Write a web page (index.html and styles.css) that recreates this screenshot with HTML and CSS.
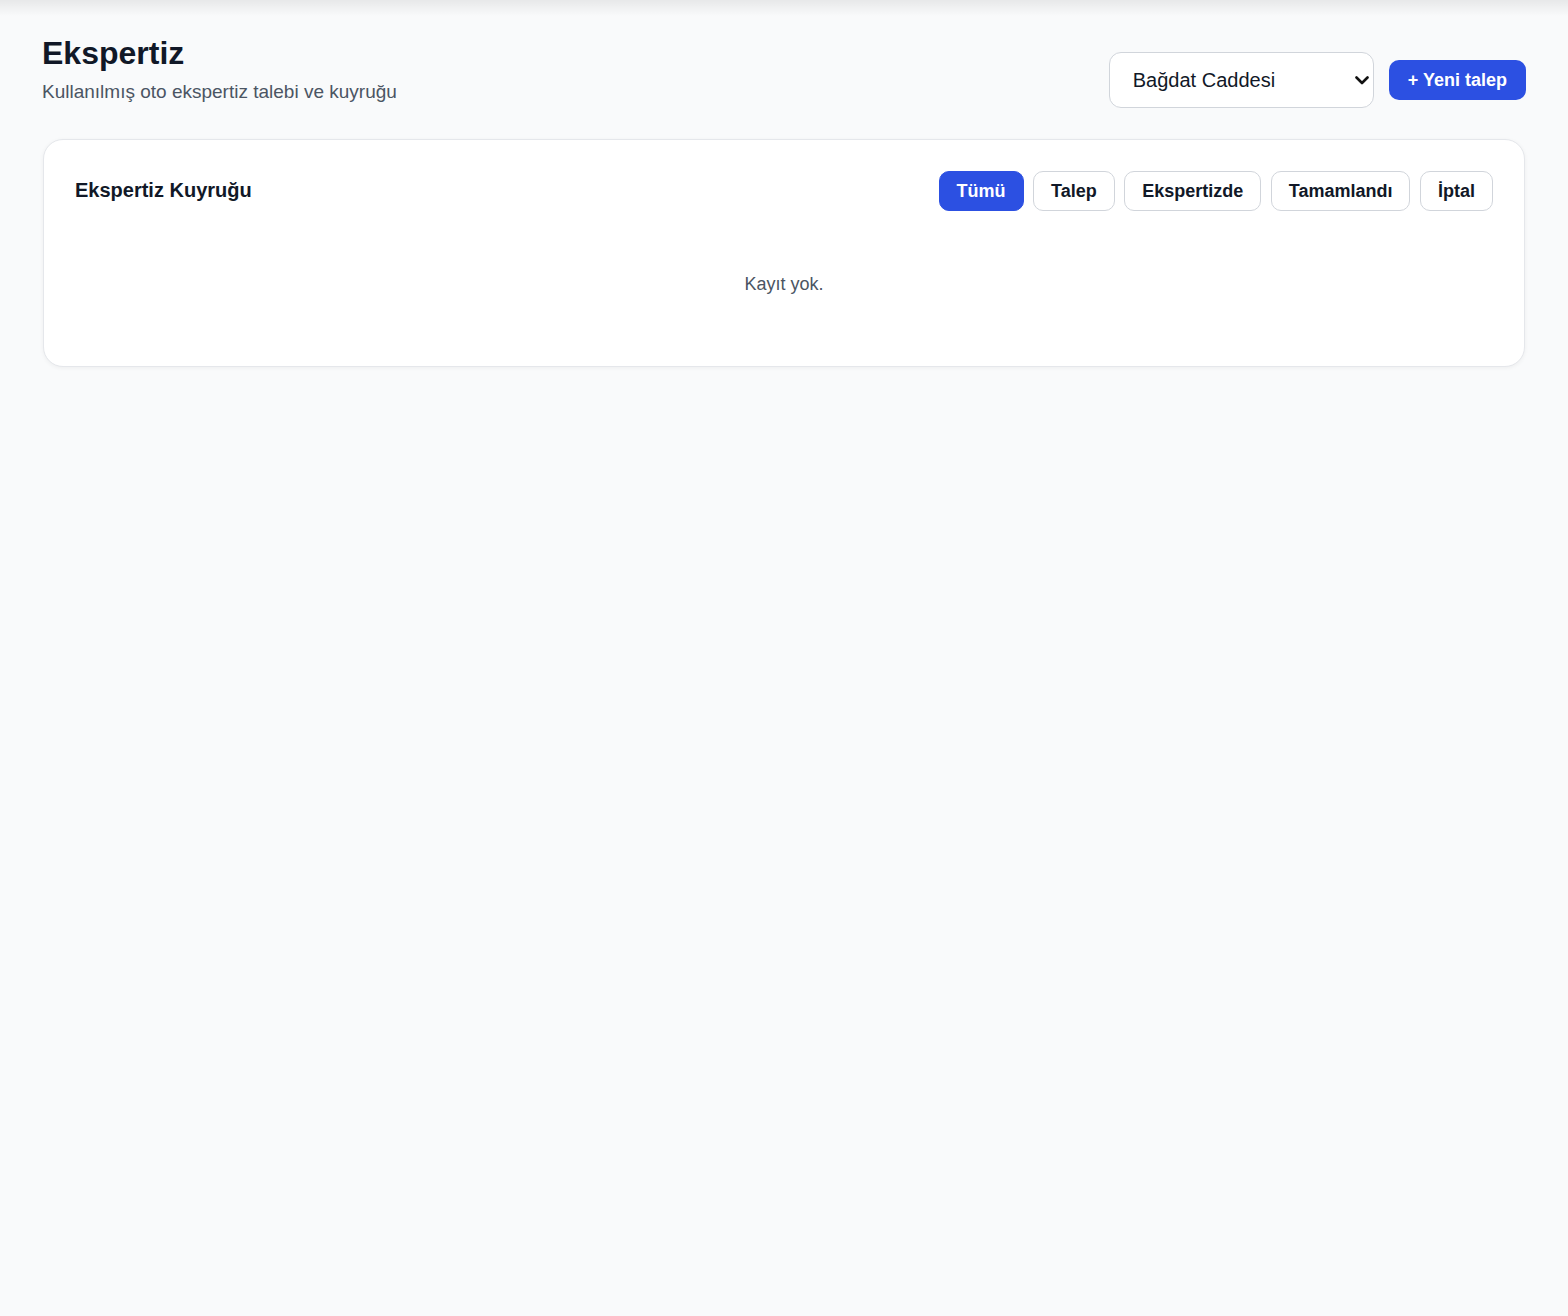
FILE: index.html
```html
<!DOCTYPE html>
<html lang="tr">
<head>
<meta charset="utf-8">
<title>Ekspertiz</title>
<link rel="stylesheet" href="styles.css">
</head>
<body>
<div class="topshade"></div>
<main class="page">
  <header class="page-head">
    <div class="titles">
      <h1 class="title">Ekspertiz</h1>
      <p class="subtitle">Kullanılmış oto ekspertiz talebi ve kuyruğu</p>
    </div>
    <div class="actions">
      <div class="select-wrap">
        <select class="branch">
          <option>Bağdat Caddesi</option>
        </select>
        <svg class="chev" width="14" height="9" viewBox="0 0 14 9"><path d="M1.5 1.5 L7 7 L12.5 1.5" fill="none" stroke="#111" stroke-width="2.6" stroke-linecap="round" stroke-linejoin="round"/></svg>
      </div>
      <button class="btn-primary">+ Yeni talep</button>
    </div>
  </header>

  <section class="card">
    <div class="card-head">
      <h2 class="card-title">Ekspertiz Kuyruğu</h2>
      <div class="filters">
        <button class="chip active">Tümü</button>
        <button class="chip">Talep</button>
        <button class="chip">Ekspertizde</button>
        <button class="chip">Tamamlandı</button>
        <button class="chip">İptal</button>
      </div>
    </div>
    <div class="empty">Kayıt yok.</div>
  </section>
</main>
</body>
</html>
```
FILE: styles.css
```css
* { box-sizing: border-box; }
html, body { margin: 0; padding: 0; }
body {
  background: #f9fafb;
  font-family: "Liberation Sans", Arial, sans-serif;
  color: #111827;
  min-height: 1316px;
}
.topshade {
  height: 16px;
  background: linear-gradient(to bottom, rgba(0,0,0,0.07), rgba(0,0,0,0));
}
.page {
  padding: 17px 42px 40px;
}
.page-head {
  display: flex;
  justify-content: space-between;
  align-items: flex-end;
}
.title {
  margin: 0;
  font-size: 32px;
  line-height: 40px;
  font-weight: 700;
  color: #111827;
}
.subtitle {
  margin: 5px 0 0;
  font-size: 19px;
  line-height: 28px;
  color: #4b5563;
}
.actions {
  display: flex;
  align-items: center;
  gap: 15px;
  margin-bottom: -2px;
}
.select-wrap {
  position: relative;
}
.branch {
  appearance: none;
  -webkit-appearance: none;
  width: 265px;
  height: 56px;
  padding: 0 40px 0 23px;
  border: 1px solid #d1d5db;
  border-radius: 12px;
  background: #fff;
  font-family: "Liberation Sans", Arial, sans-serif;
  font-size: 20px;
  color: #111827;
}
.chev {
  position: absolute;
  right: 5px;
  top: 24px;
  pointer-events: none;
}
.btn-primary {
  height: 40px;
  padding: 0 19px;
  border: 0;
  border-radius: 10px;
  background: #2c50e2;
  color: #fff;
  font-family: "Liberation Sans", Arial, sans-serif;
  font-size: 18px;
  font-weight: 700;
}
.card {
  margin: 33px 1px 0;
  background: #fff;
  border: 1px solid #e5e7eb;
  border-radius: 20px;
  box-shadow: 0 1px 4px rgba(0,0,0,0.05);
  padding: 31px 31px 31px;
}
.card-head {
  display: flex;
  justify-content: space-between;
  align-items: flex-start;
}
.card-title {
  margin: 5px 0 0;
  font-size: 20px;
  line-height: 28px;
  font-weight: 700;
  color: #111827;
}
.filters {
  display: flex;
  gap: 9.5px;
}
.chip {
  height: 40px;
  padding: 0 17px;
  border: 1px solid #d1d5db;
  border-radius: 10px;
  background: #fff;
  color: #111827;
  font-family: "Liberation Sans", Arial, sans-serif;
  font-size: 18px;
  font-weight: 700;
}
.chip.active {
  background: #2c50e2;
  border-color: #2c50e2;
  color: #fff;
}
.empty {
  padding: 61px 0 39px;
  text-align: center;
  font-size: 18px;
  line-height: 24px;
  color: #4b5563;
}
```
